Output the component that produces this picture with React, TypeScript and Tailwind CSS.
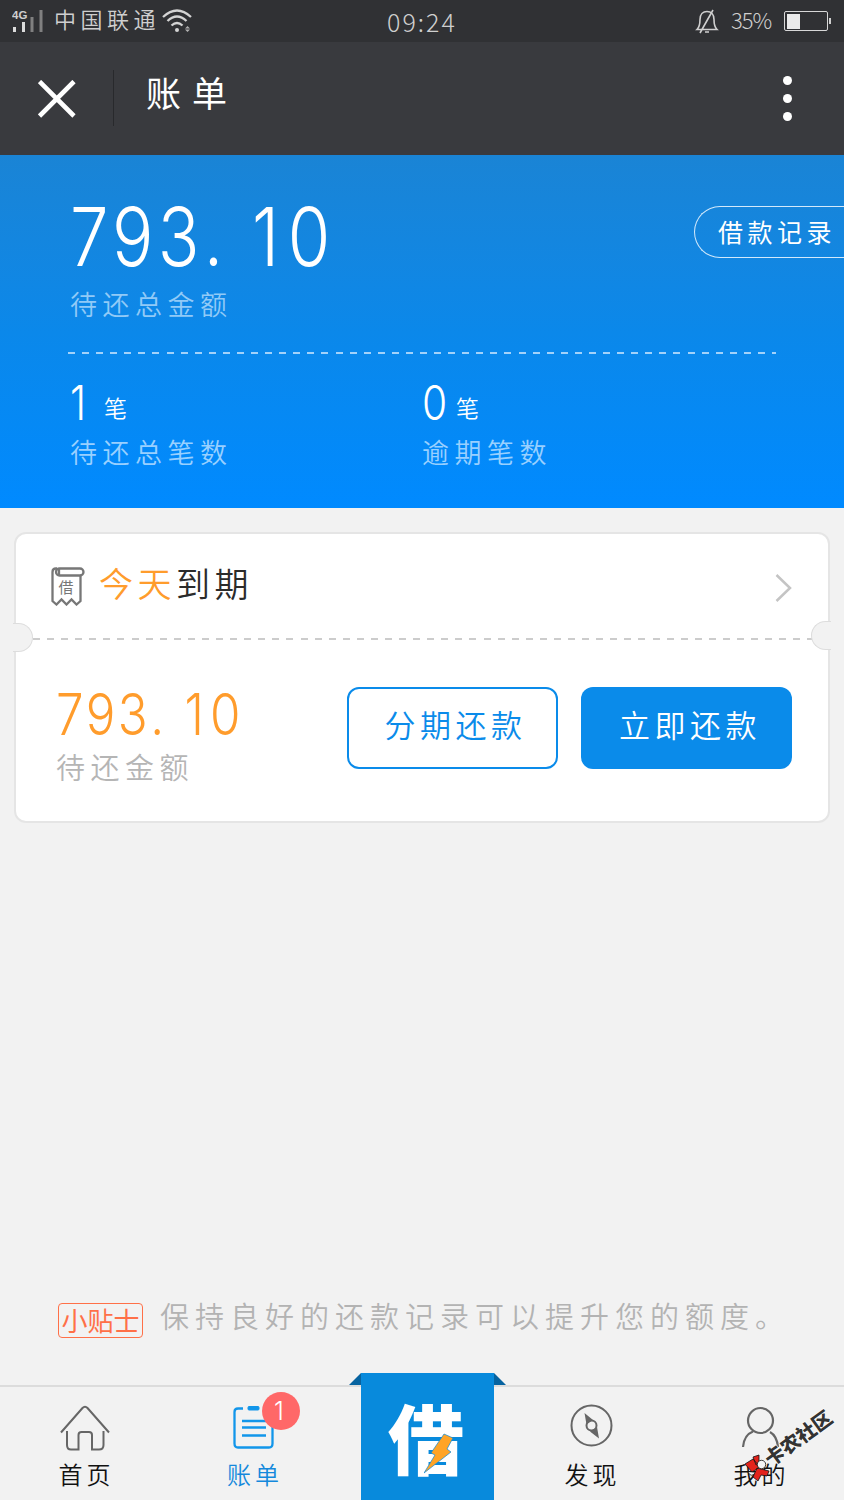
import React from "react";

const dash = "h-[2px] bg-[repeating-linear-gradient(to_right,currentColor_0px,currentColor_7px,transparent_7px,transparent_14.08px)]";

function StatusBar() {
  return (
    <div className="flex h-[42px] items-start bg-[#303134] text-[#cfcfcf]">
      <div className="flex w-[387px] pl-[12px]">
        <svg className="mt-[9px] h-6 w-[32px]" viewBox="0 0 32 24">
          <text x="0" y="10" fontSize="11.5" fontWeight="700" fill="#cfcfcf" fontFamily="Liberation Sans, sans-serif">4G</text>
          <path d="M1 18h3v5H1zM10 13h3v10h-3z" fill="#dcdcdc" />
          <path d="M18.500 8h3v15h-3zM27.500 1h3v22h-3z" fill="#808080" />
        </svg>
        <span className="ml-[10px] mt-[7px] whitespace-nowrap text-[22px] font-[350] leading-none tracking-[4.500px]">中国联通</span>
        <svg className="ml-[1px] mt-[8px] h-6 w-8" viewBox="0 0 32 24" fill="none" stroke="#d4d4d4" strokeWidth="2.300">
          <path d="M3 9Q17 -4 31 9" transform="translate(-1 0)" />
          <path d="M6.500 13Q16 4 25.500 13" />
          <path d="M10.500 17.500Q16 12.500 21.500 17.500" />
          <circle cx="16" cy="22" r="2" fill="#d4d4d4" stroke="none" />
          <path d="M24 20.500l2.500-2.500 2.500 2.500zM24 21.500l2.500 2.500 2.500-2.500z" fill="#b0b0b0" stroke="none" />
        </svg>
      </div>
      <span className="mt-[9px] w-[308px] whitespace-nowrap text-[25px] font-light leading-none tracking-[2px]">09:24</span>
      <svg className="mt-[9px] h-[26px] w-[24px]" viewBox="0 0 24 26" fill="none" stroke="#cfcfcf" strokeWidth="1.600">
        <path d="M2 20.500c3-3 3-6 3-10 0-5 3-8 7-8s7 3 7 8c0 4 0 7 3 10zM18 1L5 24M10 23h4" />
      </svg>
      <span className="ml-[12px] mt-[8px] w-[53px] whitespace-nowrap text-[22px] font-light leading-none tracking-[-1px]">35%</span>
      <div className="mt-[11px] flex items-center">
        <div className="h-[20px] w-[44px] rounded-[2px] border-[1.500px] border-[#d8d8d8] p-[1.500px]">
          <div className="h-full w-[13px] bg-[#eaeaea]" />
        </div>
        <div className="ml-px h-[6px] w-[2px] bg-[#d0d0d0]" />
      </div>
    </div>
  );
}

function Header() {
  return (
    <header className="flex h-[113px] items-start bg-[#393a3e] text-white">
      <svg className="ml-[38px] mt-[38px] h-[38px] w-[38px]" viewBox="0 0 38 38" stroke="white" strokeWidth="4.600">
        <path d="M1.500 1.500L36 36M36 1.500L1.500 36" />
      </svg>
      <div className="ml-[37px] mt-[28px] h-[56px] w-px bg-[#28292c]" />
      <h1 className="ml-[32px] mt-[32px] whitespace-nowrap text-[35px] font-normal leading-none tracking-[11px]">账单</h1>
      <div className="ml-auto mr-[52px] mt-[34px] flex flex-col gap-[9px]">
        <i className="size-[9px] rounded-full bg-white" />
        <i className="size-[9px] rounded-full bg-white" />
        <i className="size-[9px] rounded-full bg-white" />
      </div>
    </header>
  );
}

function Count({ value, label }: { value: string; label: string }) {
  return (
    <div className="w-[352px] pl-[2px]">
      <div className="flex items-end">
        <span className="mt-[4px] w-[34px] origin-left scale-x-85 font-[Inter,sans-serif] text-[48px] font-light leading-none">{value}</span>
        <span className="mb-[8px] text-[23px] font-[350] leading-none">笔</span>
      </div>
      <div className="mt-[11px] whitespace-nowrap text-[27px] font-[350] leading-none tracking-[5.500px] text-[#99d0ff]">{label}</div>
    </div>
  );
}

function Summary() {
  return (
    <section className="h-[353px] bg-linear-to-b from-[#1a84d5] via-[#0b88ea] to-[#008aff] pl-[68px] text-white">
      <div className="flex justify-between">
        <div className="pl-[2px] pt-[42px]">
          <div className="w-[320px] origin-left scale-x-85 whitespace-nowrap font-[Inter,sans-serif] text-[81px] font-light leading-none tracking-[5px]">793<span className="tracking-[34px]">.</span><span className="tracking-[10px]">1</span>0</div>
          <div className="mt-[12px] whitespace-nowrap text-[27px] font-[350] leading-none tracking-[5.500px] text-[#91caf7]">待还总金额</div>
        </div>
        <div className="mt-[51px] flex h-[52px] w-[150px] rounded-l-full border-[1.500px] border-r-0 border-[#d3e9fb] pl-[23px] pt-[12px]">
          <span className="whitespace-nowrap text-[25px] font-normal leading-none tracking-[4.500px]">借款记录</span>
        </div>
      </div>
      <div className={"mt-[35px] w-[708px] text-[#a3d2fa] " + dash} />
      <div className="mt-[21px] flex">
        <Count value="1" label="待还总笔数" />
        <Count value="0" label="逾期笔数" />
      </div>
    </section>
  );
}

function BillCard() {
  return (
    <section className="relative mx-[14px] mt-[24px] h-[291px] rounded-[12px] border-[2.500px] border-[#e5e5e5] bg-white">
      <div className="flex h-[104px] items-start pl-[35px] pr-[36px]">
        <svg className="mt-[33px] h-[39px] w-[34px]" viewBox="0 0 34 39" fill="none" stroke="#777" strokeWidth="2.300">
          <rect x="5" y="1.500" width="27.500" height="7" rx="3.500" />
          <path d="M6 1.500H5Q1.500 1.500 1.500 5V34L5.500 37.500 10.500 32.500 15.500 37.500 20.500 32.500 25.500 37.500 29.500 34V8.500M8 2v6" />
          <text x="7.500" y="25.500" fontSize="15" fill="#777" stroke="none" fontFamily="Noto Sans CJK SC, sans-serif">借</text>
        </svg>
        <span className="ml-[14px] mt-[32px] whitespace-nowrap text-[34px] font-[350] leading-none tracking-[4.500px] text-[#2b2b2b]"><span className="text-[#ff9c2c]">今天</span>到期</span>
        <svg className="ml-auto mt-[40px] h-[28px] w-[17px]" viewBox="0 0 17 28" fill="none" stroke="#c4c4c4" strokeWidth="2.500">
          <path d="M1.500 1L15 14 1.500 27" />
        </svg>
      </div>
      <div className={"ml-[17px] w-[779px] text-[#ccc] " + dash} />
      <div className="absolute left-[-3px] top-[89px] h-[29px] w-[20px] rounded-r-full border-[1.500px] border-l-0 border-[#ddd] bg-[#f2f2f2]" />
      <div className="absolute right-[-3px] top-[87px] h-[29px] w-[20px] rounded-l-full border-[1.500px] border-r-0 border-[#ddd] bg-[#f2f2f2]" />
      <div className="flex items-start pl-[40px] pr-[36px]">
        <div className="flex-1 pt-[45px]">
          <div className="w-[225px] origin-left scale-x-85 whitespace-nowrap font-[Inter,sans-serif] text-[58px] font-light leading-none tracking-[3px] text-[#ff9c2c]">793<span className="tracking-[24px]">.</span><span className="tracking-[7px]">1</span>0</div>
          <div className="mt-[9px] whitespace-nowrap text-[29px] font-[350] leading-none tracking-[5.500px] text-[#b5b5b5]">待还金额</div>
        </div>
        <div className="mt-[47px] flex gap-[23px]">
          <button className="flex h-[82px] w-[211px] items-start justify-center rounded-[12px] border-2 border-[#0a8bea] pl-[6px] pt-[19px] text-[31px] font-[350] leading-none tracking-[4.500px] text-[#0a8bea]">分期还款</button>
          <button className="flex h-[82px] w-[211px] items-start justify-center rounded-[12px] bg-[#0a8bea] pl-[7px] pt-[21px] text-[31px] font-[350] leading-none tracking-[4.500px] text-white">立即还款</button>
        </div>
      </div>
    </section>
  );
}

function Tab({ label, active, children }: { label: string; active?: boolean; children: React.ReactNode }) {
  return (
    <div className={"flex flex-col items-center pt-[17px] " + (active ? "text-[#1489dc]" : "text-[#111]")}>
      <div className="relative flex h-[48px] w-[50px] justify-center">{children}</div>
      <span className="mt-[10px] whitespace-nowrap pl-[4px] text-[24px] font-[350] leading-none tracking-[4px]">{label}</span>
    </div>
  );
}

function TabBar() {
  return (
    <nav className="relative grid h-[115px] grid-cols-[169px_168px_169px_169px_169px] border-t-2 border-[#dcdcdc]">
      <Tab label="首页">
        <svg className="h-[48px] w-[50px]" viewBox="0 0 50 48" fill="none" stroke="#666" strokeWidth="2">
          <path d="M1 28.500L22.500 4Q25 1.500 27.500 4L49 28.500M7 27V41Q7 45.500 11 45.500H18.500V31Q18.500 28 21.500 28H29Q32 28 32 31V45.500H39Q43.500 45.500 43.500 41V27" />
        </svg>
      </Tab>
      <Tab label="账单" active>
        <svg className="h-[48px] w-[50px]" viewBox="0 0 50 48" fill="none" stroke="#1296ea" strokeWidth="2.300">
          <path d="M15 4.500H10Q6.500 4.500 6.500 8V39.500Q6.500 43.500 10 43.500H41Q44.500 43.500 44.500 39.500V8Q44.500 4.500 41 4.500H36M14 17H38M14 23.500H38M14 31.500H38" />
          <rect x="20" y="2.500" width="11" height="3.500" rx="1" fill="#1296ea" stroke="#1296ea" strokeWidth="1" />
        </svg>
        <div className="absolute left-[34px] top-[-12px] flex size-[38px] items-center justify-center rounded-full bg-[#ff6868] pr-[4px] font-[Inter,sans-serif] text-[25px] font-light leading-none text-white">1</div>
      </Tab>
      <div className="relative">
        <div className="absolute left-[12px] top-[-14px] flex">
          <svg className="h-[12px] w-[12px]" viewBox="0 0 12 12"><path d="M12 0V12H0z" fill="#0663a0" /></svg>
          <div className="relative h-[127px] w-[133px] bg-[#088adc]">
            <div className="absolute left-[27px] top-[25px] text-[76px] font-black leading-none text-white">借</div>
            <svg className="absolute left-[63px] top-[60px] h-[41px] w-[30px]" viewBox="0 0 30 41">
              <path d="M20 1L29 5 23 16 27 19 0 40 11 22 7 20z" fill="#ffa426" stroke="#088adc" strokeWidth="0.700" />
            </svg>
          </div>
          <svg className="h-[12px] w-[12px]" viewBox="0 0 12 12"><path d="M0 0V12H12z" fill="#0663a0" /></svg>
        </div>
      </div>
      <Tab label="发现">
        <svg className="h-[48px] w-[50px]" viewBox="0 0 50 48" fill="none" stroke="#666" strokeWidth="2">
          <circle cx="25.500" cy="21.500" r="20" />
          <circle cx="25.500" cy="21.500" r="5" />
          <path d="M18.500 9L27 16 20.500 20.500zM33 34.500L24 27.500 31 23z" fill="#666" stroke="none" />
        </svg>
      </Tab>
      <Tab label="我的">
        <svg className="h-[48px] w-[50px]" viewBox="0 0 50 48" fill="none" stroke="#666" strokeWidth="2.200">
          <circle cx="25.500" cy="16.500" r="12.500" />
          <path d="M8 43Q9 31 18 27.500M35 28Q42 32 43 43" />
        </svg>
      </Tab>
      <svg className="absolute right-0 top-[13px] h-[90px] w-[110px]" viewBox="734 1400 110 90">
        <g stroke="#111" strokeWidth="0.800">
          <path d="M745 1464L753 1459 760 1467 752 1472zM753 1457L759 1455 759 1464 756 1465zM757 1468L769 1471 767 1476 761 1475 758 1481 753 1477z" fill="#e3231b" />
          <circle cx="761.500" cy="1464.500" r="4.200" fill="#f4f4f4" />
          <path d="M748 1472Q751 1478 755 1473" fill="#f4f4f4" />
        </g>
        <text x="0" y="0" transform="translate(771 1467) rotate(-36)" fontSize="19.5" fontWeight="900" fill="#333" stroke="#fff" strokeWidth="1" paintOrder="stroke" fontFamily="Noto Sans CJK SC, sans-serif">卡农社区</text>
      </svg>
    </nav>
  );
}

export default function App() {
  return (
    <main className="flex h-[1500px] w-[844px] flex-col overflow-hidden bg-[#f2f2f2] font-['Noto_Sans_CJK_SC',sans-serif]">
      <StatusBar />
      <Header />
      <Summary />
      <BillCard />
      <div className="mt-auto flex h-[84px] items-start pl-[58px]">
        <span className="mt-[2px] flex h-[35px] w-[85px] items-start justify-center rounded-[4px] border-[1.500px] border-[#ff7048] pt-[3px] text-[26px] leading-none text-[#ff7048]">小贴士</span>
        <span className="ml-[17px] whitespace-nowrap text-[29px] font-[350] leading-none tracking-[6px] text-[#b3b3b3]">保持良好的还款记录可以提升您的额度。</span>
      </div>
      <TabBar />
    </main>
  );
}
